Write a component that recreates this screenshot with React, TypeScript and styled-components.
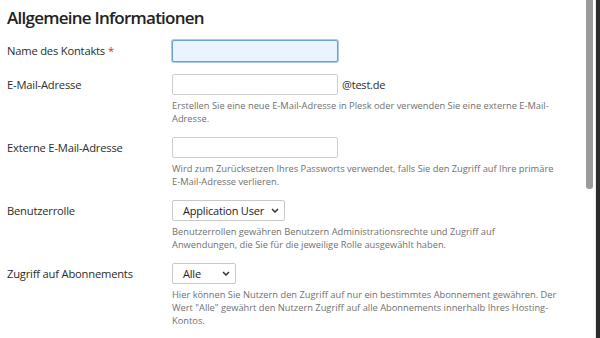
import React from "react";
import styled, { createGlobalStyle } from "styled-components";

const Global = createGlobalStyle`
  html, body { margin: 0; padding: 0; background: #fff; }
  body { font-family: "Open Sans", "Noto Sans", sans-serif; color: #333; }
  * { box-sizing: border-box; }
`;

const Page = styled.div`
  display: flex;
  width: 600px;
  height: 338px;
  overflow: hidden;
`;

const Main = styled.div`
  flex: 1;
  padding: 6px 0 0 7px;
`;

const Title = styled.h2`
  margin: 0 0 10px;
  font-size: 17px;
  font-weight: 600;
  letter-spacing: -0.75px;
  color: #222;
  line-height: 24px;
`;

const Form = styled.div`
  display: grid;
  grid-template-columns: 165px 1fr;
  row-gap: 12px;
`;

const Label = styled.div`
  font-size: 11.2px;
  letter-spacing: -0.2px;
  line-height: 21px;
  color: #2c2c2c;
`;

const Req = styled.span`
  color: #c9302c;
  margin-left: 3px;
`;

const Field = styled.div`
  display: flex;
  flex-direction: column;
`;

const InputLine = styled.div`
  display: flex;
  align-items: center;
  gap: 4px;
  font-size: 11px;
  letter-spacing: -0.2px;
  color: #2c2c2c;
`;

const TextInput = styled.div<{ $focus?: boolean }>`
  width: 166px;
  height: ${(p) => (p.$focus ? 22 : 21)}px;
  border: 1px solid ${(p) => (p.$focus ? "#6f9fd8" : "#cfcfcf")};
  border-radius: 2px;
  background: ${(p) => (p.$focus ? "#eaf4fe" : "#fff")};
  box-shadow: ${(p) => (p.$focus ? "0 0 0 1px #a9c8ec" : "none")};
`;

const Select = styled.div<{ $w: number }>`
  width: ${(p) => p.$w}px;
  height: 21px;
  border: 1px solid #c8c8c8;
  border-radius: 2px;
  display: flex;
  align-items: center;
  justify-content: space-between;
  padding: 0 5px 0 10px;
  font-size: 11px;
  letter-spacing: -0.2px;
  color: #222;
  white-space: nowrap;
`;

const Help = styled.div`
  margin-top: 4px;
  max-width: 387px;
  font-size: 9.3px;
  line-height: 13px;
  color: #707070;
`;

const Track = styled.div`
  width: 10px;
  padding: 0 2px 0 1px;
  display: flex;
  flex-direction: column;
`;

const Thumb = styled.div`
  height: 189px;
  background: #9a9a9a;
  border-radius: 0 0 3px 3px;
`;

const Edge = styled.div`
  width: 5px;
  background: #2b2b2b;
  border-left: 1px solid #e8e8e8;
`;

const Chevron = () => (
  <svg width="8" height="5" viewBox="0 0 8 5">
    <path d="M1 1l3 3 3-3" fill="none" stroke="#333" strokeWidth="1.5" />
  </svg>
);

export default function App() {
  return (
    <Page>
      <Global />
      <Main>
        <Title>Allgemeine Informationen</Title>
        <Form>
          <Label>
            Name des Kontakts<Req>*</Req>
          </Label>
          <Field>
            <TextInput $focus />
          </Field>

          <Label>E-Mail-Adresse</Label>
          <Field>
            <InputLine>
              <TextInput />
              @test.de
            </InputLine>
            <Help>
              Erstellen Sie eine neue E-Mail-Adresse in Plesk oder verwenden Sie eine externe
              E-Mail-Adresse.
            </Help>
          </Field>

          <Label>Externe E-Mail-Adresse</Label>
          <Field>
            <TextInput />
            <Help>
              Wird zum Zurücksetzen Ihres Passworts verwendet, falls Sie den Zugriff auf Ihre
              primäre E-Mail-Adresse verlieren.
            </Help>
          </Field>

          <Label>Benutzerrolle</Label>
          <Field>
            <Select $w={113}>
              Application User <Chevron />
            </Select>
            <Help>
              Benutzerrollen gewähren Benutzern Administrationsrechte und Zugriff auf
              Anwendungen, die Sie für die jeweilige Rolle ausgewählt haben.
            </Help>
          </Field>

          <Label>Zugriff auf Abonnements</Label>
          <Field>
            <Select $w={64}>
              Alle <Chevron />
            </Select>
            <Help>
              Hier können Sie Nutzern den Zugriff auf nur ein bestimmtes Abonnement gewähren.
              Der Wert "Alle" gewährt den Nutzern Zugriff auf alle Abonnements innerhalb Ihres
              Hosting-Kontos.
            </Help>
          </Field>
        </Form>
      </Main>
      <Track>
        <Thumb />
      </Track>
      <Edge />
    </Page>
  );
}
